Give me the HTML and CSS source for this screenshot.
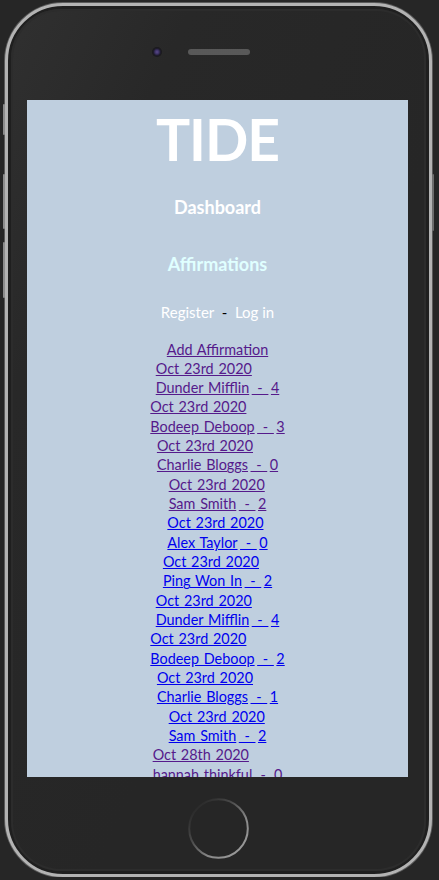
FILE: index.html
```html
<!DOCTYPE html>
<html lang="en">
<head>
<meta charset="utf-8">
<title>TIDE</title>
<link rel="stylesheet" href="styles.css">
</head>
<body>
<div class="phone">
  <span class="side-btn side-btn-mute"></span>
  <span class="side-btn side-btn-vol-up"></span>
  <span class="side-btn side-btn-vol-down"></span>
  <span class="side-btn side-btn-power"></span>
  <div class="bezel">
    <div class="top-bar">
      <span class="camera"></span>
      <span class="speaker"></span>
    </div>
    <div class="screen">
      <h1 class="logo">TIDE</h1>
      <div class="nav-item">Dashboard</div>
      <div class="nav-item nav-active">Affirmations</div>
      <div class="auth"><a class="auth-link" href="#">Register</a> <span class="auth-sep">&nbsp;-&nbsp;</span> <a class="auth-link" href="#">Log in</a></div>
      <div class="list">
        <div class="add"><a class="visited" href="#">Add Affirmation</a></div>
        <div class="entry visited"><a href="#">Oct 23rd 2020</a><br><a href="#">Dunder Mifflin</a> <a class="dash" href="#">&nbsp;-&nbsp;</a> <a class="count" href="#">4</a></div>
        <div class="entry visited"><a href="#">Oct 23rd 2020</a><br><a href="#">Bodeep Deboop</a> <a class="dash" href="#">&nbsp;-&nbsp;</a> <a class="count" href="#">3</a></div>
        <div class="entry visited"><a href="#">Oct 23rd 2020</a><br><a href="#">Charlie Bloggs</a> <a class="dash" href="#">&nbsp;-&nbsp;</a> <a class="count" href="#">0</a></div>
        <div class="entry visited"><a href="#">Oct 23rd 2020</a><br><a href="#">Sam Smith</a> <a class="dash" href="#">&nbsp;-&nbsp;</a> <a class="count" href="#">2</a></div>
        <div class="entry"><a href="#">Oct 23rd 2020</a><br><a href="#">Alex Taylor</a> <a class="dash" href="#">&nbsp;-&nbsp;</a> <a class="count" href="#">0</a></div>
        <div class="entry"><a href="#">Oct 23rd 2020</a><br><a href="#">Ping Won In</a> <a class="dash" href="#">&nbsp;-&nbsp;</a> <a class="count" href="#">2</a></div>
        <div class="entry"><a href="#">Oct 23rd 2020</a><br><a href="#">Dunder Mifflin</a> <a class="dash" href="#">&nbsp;-&nbsp;</a> <a class="count" href="#">4</a></div>
        <div class="entry"><a href="#">Oct 23rd 2020</a><br><a href="#">Bodeep Deboop</a> <a class="dash" href="#">&nbsp;-&nbsp;</a> <a class="count" href="#">2</a></div>
        <div class="entry"><a href="#">Oct 23rd 2020</a><br><a href="#">Charlie Bloggs</a> <a class="dash" href="#">&nbsp;-&nbsp;</a> <a class="count" href="#">1</a></div>
        <div class="entry"><a href="#">Oct 23rd 2020</a><br><a href="#">Sam Smith</a> <a class="dash" href="#">&nbsp;-&nbsp;</a> <a class="count" href="#">2</a></div>
        <div class="entry visited"><a href="#">Oct 28th 2020</a><br><a href="#">hannah thinkful</a> <a class="dash" href="#">&nbsp;-&nbsp;</a> <a class="count" href="#">0</a></div>
      </div>
    </div>
    <div class="bottom-bar">
      <svg class="home-btn" width="61" height="61" viewBox="0 0 61 61" aria-hidden="true">
        <defs>
          <linearGradient id="homeGrad" x1="0.1" y1="0.1" x2="0.9" y2="0.9">
            <stop offset="0" stop-color="#262626"/>
            <stop offset="0.35" stop-color="#4a4a4a"/>
            <stop offset="0.7" stop-color="#8a8a8a"/>
            <stop offset="1" stop-color="#9a9a9a"/>
          </linearGradient>
        </defs>
        <circle cx="30.5" cy="30.5" r="29.3" fill="none" stroke="url(#homeGrad)" stroke-width="2"/>
      </svg>
    </div>
  </div>
</div>
</body>
</html>
```

FILE: styles.css
```css
html, body {
  margin: 0;
  padding: 0;
}

body {
  background: #262626;
  font-family: "Lato", "Segoe UI", sans-serif;
}

.phone {
  position: relative;
  box-sizing: border-box;
  width: 427px;
  height: 874px;
  margin: 3px 0 0 5px;
  border: 3px solid #b3b3b3;
  border-radius: 58px;
  background: #1f1f1f;
  padding: 3px;
  box-shadow: 0 0 0 1px #5a5a5a;
}

.side-btn {
  position: absolute;
  width: 2px;
  background: #8c8c8c;
  border-radius: 1px;
}

.side-btn-mute { left: -5px; top: 98px; height: 31px; }
.side-btn-vol-up { left: -5px; top: 168px; height: 55px; }
.side-btn-vol-down { left: -5px; top: 236px; height: 56px; }
.side-btn-power { right: -5px; top: 168px; height: 57px; background: #6e6e6e; }

.bezel {
  box-sizing: border-box;
  height: 862px;
  border-radius: 50px;
  background: linear-gradient(115deg, #303030 0%, #282828 22%, #262626 60%, #262626 100%);
  box-shadow: inset 0 0 0 2px #2c2c2c;
  display: flex;
  flex-direction: column;
}

.top-bar {
  box-sizing: border-box;
  height: 91px;
  display: flex;
  justify-content: center;
  align-items: flex-start;
  padding: 38px 35px 0 0;
}

.camera {
  width: 10px;
  height: 10px;
  border-radius: 50%;
  background: radial-gradient(circle at 50% 50%, #5b4b8c 0, #3d3266 2px, #1f1c2c 3.5px, #181818 5px);
  margin-right: 26px;
}

.speaker {
  width: 62px;
  height: 6px;
  margin-top: 2px;
  border-radius: 3px;
  background-color: #3c3c3c;
  background-image: radial-gradient(circle, #5a5a5a 0.7px, transparent 1px);
  background-size: 2px 2px;
}

.screen {
  width: 381px;
  height: 677px;
  margin-left: 16px;
  background: #bfcfdf;
  overflow: hidden;
  text-align: center;
}

.logo {
  margin: 7px 0 0;
  font-size: 57px;
  line-height: 64px;
  font-weight: 700;
  color: #ffffff;
  letter-spacing: -1px;
}

.nav-item {
  font-size: 18px;
  line-height: 20px;
  font-weight: 700;
  color: #ffffff;
  margin-top: 26px;
}

.nav-active {
  color: #e0ffff;
  margin-top: 37px;
}

.auth {
  font-size: 15px;
  line-height: 20px;
  margin-top: 28px;
  color: #000000;
}

.auth-link {
  color: #ffffff;
  text-decoration: none;
}

.list {
  margin-top: 17.5px;
  font-size: 14.4px;
  line-height: 19.33px;
  word-spacing: 1.1px;
}

.list a {
  color: #0000ee;
  text-decoration: underline;
}

.list .visited a,
.list a.visited {
  color: #551a8b;
}

.list .dash {
  word-spacing: 2px;
  margin-left: 2.5px;
}

.list .count {
  margin-left: 2.5px;
}

.entry {
  display: table;
  margin: 0 auto;
  text-align: left;
}

.bottom-bar {
  flex: 1;
  display: flex;
  justify-content: center;
  align-items: flex-start;
  padding-top: 21px;
}

.home-btn {
  display: block;
}
```
